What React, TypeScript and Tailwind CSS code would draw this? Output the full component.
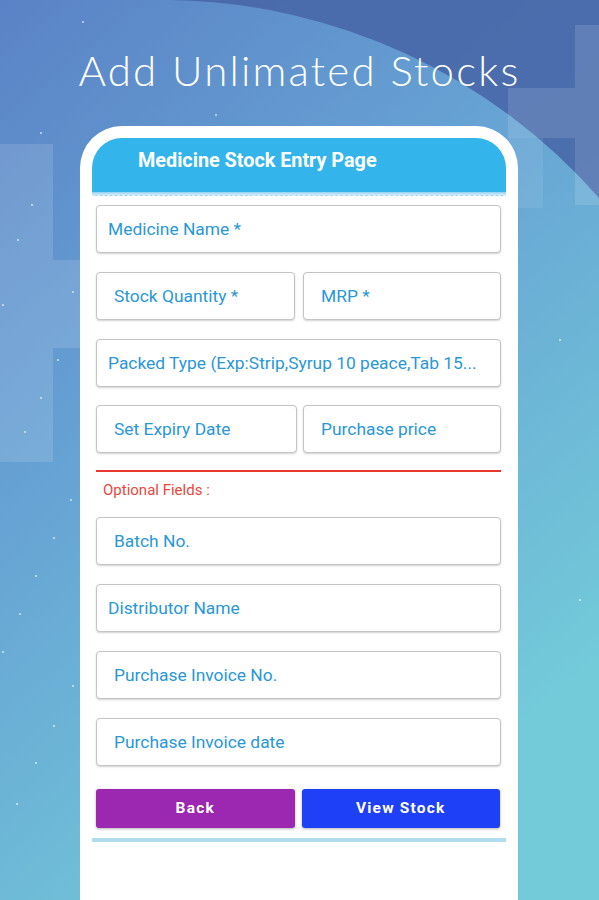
import React from "react";

const Field = ({ label, pad = "pl-[17px]", className = "" }: { label: string; pad?: string; className?: string }) => (
  <div
    className={`h-[48px] flex items-center rounded-[4px] border border-[#c4c4c4] bg-white shadow-[0_1px_2px_rgba(0,0,0,0.18)] ${pad} ${className}`}
  >
    <span className="text-[17.4px] text-[#2a97d6] whitespace-nowrap overflow-hidden" style={{ fontFamily: "Roboto, 'Noto Sans', sans-serif" }}>
      {label}
    </span>
  </div>
);

export default function App() {
  const stars = [
    [83, 22], [150, 85], [216, 115], [41, 133], [32, 205], [18, 240], [3, 305], [73, 292], [58, 360], [41, 398], [25, 432],
    [71, 500], [54, 538], [36, 576], [20, 614], [3, 652], [73, 686], [54, 726], [36, 763], [17, 804], [560, 340], [580, 600],
  ];
  return (
    <div
      className="relative w-[599px] h-[900px] overflow-hidden flex flex-col"
      style={{ fontFamily: "Roboto, 'Noto Sans', sans-serif" }}
    >
      <svg className="absolute inset-0" width="599" height="900" viewBox="0 0 599 900">
        <defs>
          <linearGradient id="bg" x1="0" y1="0" x2="0.55" y2="1">
            <stop offset="0" stopColor="#5a82c6" />
            <stop offset="0.45" stopColor="#67a3d4" />
            <stop offset="1" stopColor="#73cbd9" />
          </linearGradient>
        </defs>
        <rect width="599" height="900" fill="url(#bg)" />
        <path d="M170 0 A582 582 0 0 1 599 198 L599 0 Z" fill="#4664a6" opacity="0.85" />
        <rect x="0" y="144" width="53" height="318" fill="#ffffff" opacity="0.13" />
        <rect x="53" y="260" width="40" height="88" fill="#ffffff" opacity="0.13" />
        <rect x="575" y="25" width="24" height="180" fill="#ffffff" opacity="0.12" />
        <rect x="508" y="88" width="67" height="50" fill="#ffffff" opacity="0.12" />
        <rect x="508" y="138" width="35" height="70" fill="#ffffff" opacity="0.08" />
        {stars.map(([x, y], i) => (
          <circle key={i} cx={x} cy={y} r="1" fill="#ffffff" opacity="0.7" />
        ))}
      </svg>

      <div className="relative pt-[43px] h-[126px] text-center">
        <div
          className="text-white text-[42px] leading-[54px] font-light tracking-[2.2px]"
          style={{ fontFamily: "Lato, 'Open Sans', sans-serif" }}
        >
          Add Unlimated Stocks
        </div>
      </div>

      <div className="relative ml-[80px] w-[438px] flex-1 bg-white rounded-t-[42px] pt-[12px] px-[12px]">
        <div className="h-[54px] rounded-t-[30px] bg-[#33b5eb] pl-[46px] pt-[11px]">
          <span className="text-white text-[19.8px] font-bold leading-[24px]">Medicine Stock Entry Page</span>
        </div>
        <div className="h-[4px] bg-[linear-gradient(to_bottom,#8fd1f0,#d6eefa)] border-b border-dashed border-white/60" />

        <div className="pl-[4px] pr-[5px] pt-[9px] flex flex-col">
          <Field label="Medicine Name *" pad="pl-[11px]" />
          <div className="mt-[19px] flex gap-[8px]">
            <Field label="Stock Quantity *" className="w-[199px]" />
            <Field label="MRP *" className="flex-1" />
          </div>
          <div className="mt-[19px]">
            <Field label="Packed Type (Exp:Strip,Syrup 10 peace,Tab 15..." pad="pl-[11px]" />
          </div>
          <div className="mt-[18px] flex gap-[6px]">
            <Field label="Set Expiry Date" className="w-[201px]" />
            <Field label="Purchase price" className="flex-1" />
          </div>
          <div className="mt-[17px] h-[2px] bg-[#e8372c]" />
          <div className="pl-[7px] mt-[10px] text-[15px] leading-[17px] text-[#e8473c]">Optional Fields :</div>
          <div className="mt-[18px] flex flex-col gap-[19px]">
            <Field label="Batch No." />
            <Field label="Distributor Name" pad="pl-[11px]" />
            <Field label="Purchase Invoice No." />
            <Field label="Purchase Invoice date" />
          </div>
          <div className="mt-[23px] flex gap-[7px] pr-[1px]">
            <button className="flex-1 h-[39px] rounded-[3px] bg-[#9c27b0] text-white text-[15.5px] font-bold tracking-[1.2px] shadow-[0_1px_3px_rgba(0,0,0,0.3)]">
              Back
            </button>
            <button className="flex-1 h-[39px] rounded-[3px] bg-[#1e40f6] text-white text-[15.5px] font-bold tracking-[1.2px] shadow-[0_1px_3px_rgba(0,0,0,0.3)]">
              View Stock
            </button>
          </div>
        </div>
        <div className="mt-[10px] h-[4px] bg-[#b2dcef]" />
      </div>
    </div>
  );
}
